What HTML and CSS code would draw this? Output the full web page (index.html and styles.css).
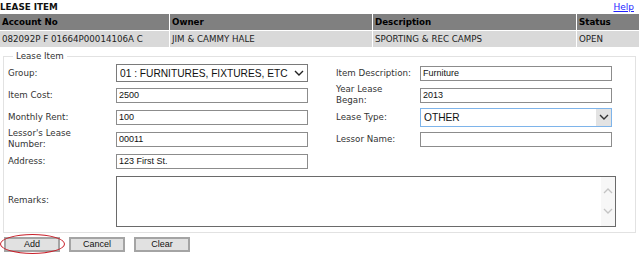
FILE: index.html
```html
<!DOCTYPE html>
<html>
<head>
<meta charset="utf-8">
<link rel="stylesheet" href="styles.css">
</head>
<body>
<div class="page">
  <div class="titlebar">
    <span class="title">LEASE ITEM</span>
    <a class="help" href="#">Help</a>
  </div>
  <table class="summary">
    <colgroup><col class="c1"><col class="c2"><col class="c3"><col class="c4"></colgroup>
    <thead>
      <tr><th>Account No</th><th>Owner</th><th>Description</th><th>Status</th></tr>
    </thead>
    <tbody>
      <tr><td>082092P F 01664P00014106A C</td><td>JIM &amp; CAMMY HALE</td><td>SPORTING &amp; REC CAMPS</td><td>OPEN</td></tr>
    </tbody>
  </table>

  <fieldset class="box">
    <legend class="legend">Lease Item</legend>
    <div class="form">
      <label class="lbl">Group:</label>
      <div class="sel sel-plain">
        <select class="sel-input"><option>01 : FURNITURES, FIXTURES, ETC</option></select>
        <span class="sel-arrow"><svg width="10" height="6" viewBox="0 0 10 6"><path d="M1 1 L5 5 L9 1" fill="none" stroke="#222" stroke-width="1.4"/></svg></span>
      </div>
      <label class="lbl lbl-r">Item Description:</label>
      <input class="txt" value="Furniture">

      <label class="lbl">Item Cost:</label>
      <input class="txt" value="2500">
      <label class="lbl lbl-r">Year Lease<br>Began:</label>
      <input class="txt" value="2013">

      <label class="lbl">Monthly Rent:</label>
      <input class="txt" value="100">
      <label class="lbl lbl-r">Lease Type:</label>
      <div class="sel sel-focus">
        <select class="sel-input"><option>OTHER</option></select>
        <span class="sel-btn"><svg width="10" height="6" viewBox="0 0 10 6"><path d="M1 1 L5 5 L9 1" fill="none" stroke="#333" stroke-width="1.4"/></svg></span>
      </div>

      <label class="lbl">Lessor's Lease<br>Number:</label>
      <input class="txt" value="00011">
      <label class="lbl lbl-r">Lessor Name:</label>
      <input class="txt" value="">

      <label class="lbl">Address:</label>
      <input class="txt" value="123 First St.">
      <span class="empty"></span>
      <span class="empty"></span>

      <label class="lbl">Remarks:</label>
      <div class="area">
        <textarea class="area-input"></textarea>
        <div class="area-bar">
          <svg width="10" height="6" viewBox="0 0 10 6"><path d="M1 5 L5 1 L9 5" fill="none" stroke="#c4c4c4" stroke-width="1.3"/></svg>
          <svg width="10" height="6" viewBox="0 0 10 6"><path d="M1 1 L5 5 L9 1" fill="none" stroke="#c4c4c4" stroke-width="1.3"/></svg>
        </div>
      </div>
    </div>
  </fieldset>

  <div class="actions">
    <span class="btn-wrap"><button class="btn">Add</button><span class="ring"></span></span>
    <button class="btn">Cancel</button>
    <button class="btn">Clear</button>
  </div>
  <div class="actions actions-lower">
    <button class="btn" aria-label="Save"></button>
    <button class="btn" aria-label="Delete"></button>
    <button class="btn btn-last" aria-label="Close"></button>
  </div>
</div>
</body>
</html>
```

FILE: styles.css
```css
html, body {
  margin: 0;
  padding: 0;
  background: #fff;
  overflow: hidden;
}
.page {
  width: 639px;
  height: 256px;
  overflow: hidden;
  font-family: "DejaVu Sans", Verdana, sans-serif;
  font-size: 8.7px;
  color: #222;
}
.titlebar {
  display: flex;
  justify-content: space-between;
  align-items: center;
  height: 14px;
}
.title {
  font-weight: bold;
  font-size: 8.8px;
  color: #111;
}
.help {
  font-size: 9px;
  color: #2323ff;
  text-decoration: underline;
  margin-right: 5px;
}
.summary {
  width: 639px;
  border-collapse: separate;
  border-spacing: 0;
  table-layout: fixed;
}
.c1 { width: 169px; }
.c2 { width: 203px; }
.c3 { width: 204px; }
.c4 { width: 63px; }
.summary th, .summary td {
  height: 16px;
  padding: 0 2px;
  text-align: left;
  white-space: nowrap;
  overflow: hidden;
  border-left: 1px solid #fff;
  font-size: 8.7px;
}
.summary th:first-child, .summary td:first-child { border-left: none; }
.summary th {
  background: #808080;
  color: #000;
  font-weight: bold;
}
.summary td {
  background: #d9d9d9;
  color: #222;
  border-top: 1px solid #fff;
}
.box {
  margin: 4px 3px 0 3px;
  padding: 0 4px 4px 4px;
  border: 1px solid #e2e2e2;
  min-width: 0;
}
.legend {
  padding: 0 3px;
  margin-left: 5px;
  line-height: 11px;
  color: #333;
}
.form {
  display: grid;
  grid-template-columns: 108px 192px 112px 192px;
  grid-template-rows: 22px 22px 22px 22px 22px 56px;
  align-items: center;
}
.lbl {
  line-height: 11px;
  color: #333;
}
.lbl-r { padding-left: 28px; }
.txt {
  box-sizing: border-box;
  width: 192px;
  height: 15px;
  margin: 0;
  padding: 0 2px;
  border: 1px solid #8c8c8c;
  font-family: "Liberation Sans", Arial, sans-serif;
  font-size: 9px;
  color: #111;
  background: #fff;
  outline: none;
}
.sel {
  box-sizing: border-box;
  width: 192px;
  display: flex;
  align-items: stretch;
  background: #fff;
}
.sel-plain {
  height: 18px;
  border: 1px solid #7a7a7a;
}
.sel-focus {
  height: 19px;
  border: 1px solid #7eb4ea;
}
.sel-input {
  flex: 1;
  min-width: 0;
  appearance: none;
  -webkit-appearance: none;
  border: none;
  background: transparent;
  margin: 0;
  padding: 0 0 0 3px;
  font-family: "Liberation Sans", Arial, sans-serif;
  font-size: 10.2px;
  color: #111;
  outline: none;
}
.sel-arrow {
  width: 13px;
  display: flex;
  align-items: center;
  justify-content: flex-start;
}
.sel-btn {
  width: 15px;
  background: #e3e3e3;
  display: flex;
  align-items: center;
  justify-content: center;
}
.empty { display: block; }
.area {
  grid-column: 2 / -1;
  box-sizing: border-box;
  width: 500px;
  height: 51px;
  margin-top: 2px;
  display: flex;
  border: 1px solid #6a6a6a;
  background: #fff;
}
.area-input {
  flex: 1;
  border: none;
  resize: none;
  margin: 0;
  padding: 2px;
  outline: none;
  font-family: "Liberation Sans", Arial, sans-serif;
  font-size: 9px;
}
.area-bar {
  width: 14px;
  background: #f7f7f7;
  display: flex;
  flex-direction: column;
  justify-content: space-between;
  align-items: center;
  padding: 11px 0 12px;
  box-sizing: border-box;
}
.actions {
  display: flex;
  gap: 9px;
  margin: 4px 0 0 4px;
  align-items: center;
}
.actions-lower {
  margin: 4px -36px 0 0;
  justify-content: flex-end;
  gap: 8px;
}
.btn {
  box-sizing: border-box;
  width: 56px;
  height: 15px;
  margin: 0;
  padding: 0;
  border: 2px solid #a4a4a4;
  background: #e1e1e1;
  font-family: "Liberation Sans", Arial, sans-serif;
  font-size: 9px;
  color: #111;
  line-height: 11px;
}
.btn-last { margin-left: 2px; }
.btn-wrap {
  position: relative;
  display: inline-flex;
}
.ring {
  position: absolute;
  left: -4px;
  top: -3px;
  width: 65px;
  height: 20px;
  box-sizing: border-box;
  border: 1.5px solid #c8202a;
  border-radius: 50%;
  pointer-events: none;
}
```
